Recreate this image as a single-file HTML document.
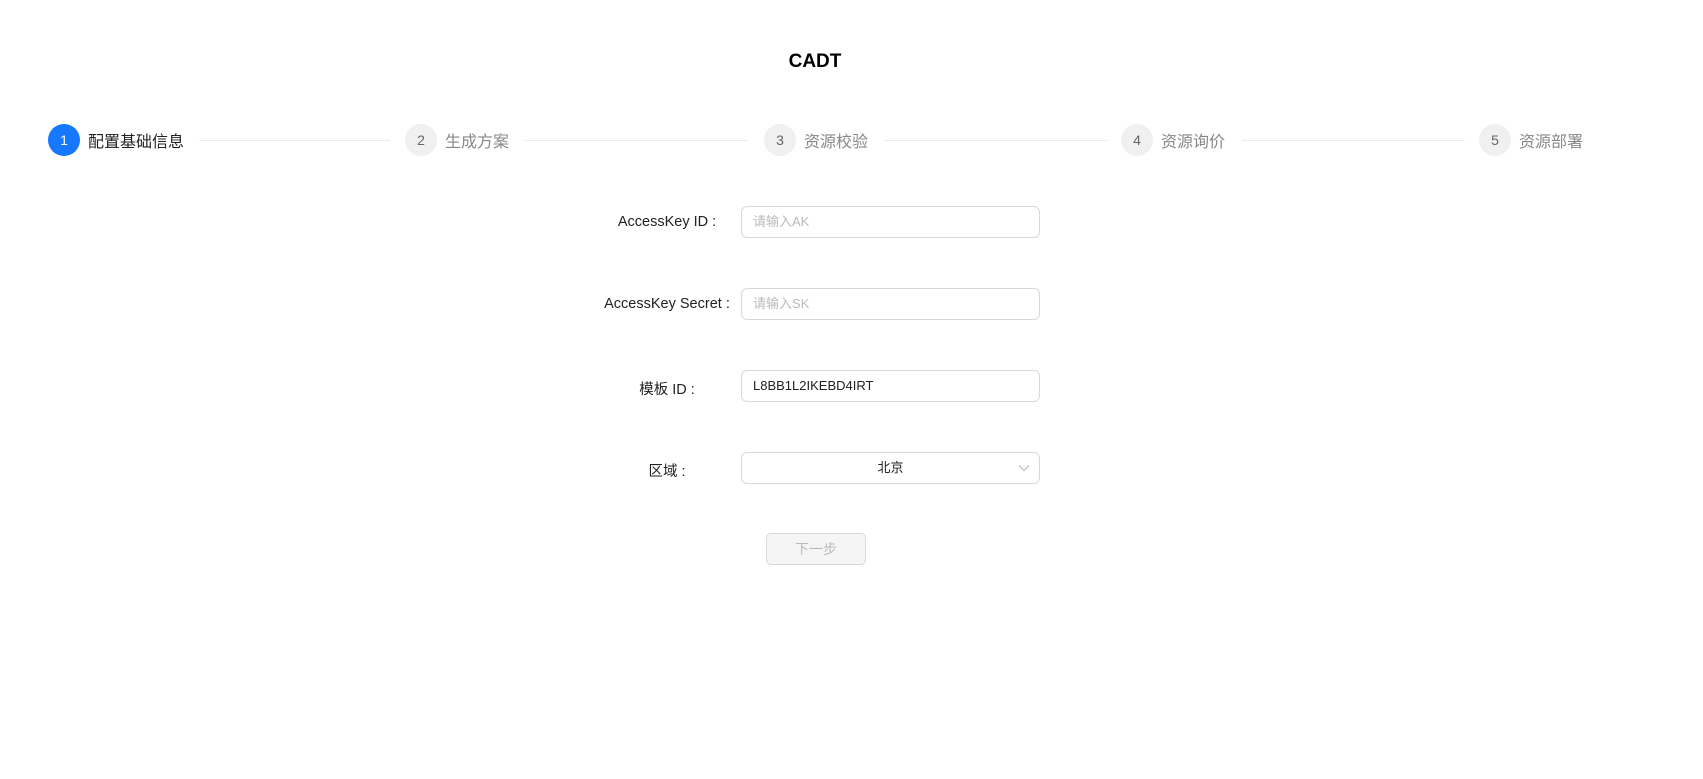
<!DOCTYPE html>
<html><head><meta charset="utf-8"><style>
*{box-sizing:border-box;margin:0;padding:0}
body{width:1703px;height:779px;background:#fff;font-family:"Liberation Sans","Noto Sans CJK SC",sans-serif;position:relative;overflow:hidden;color:#222}
.title{position:absolute;top:51px;left:0;width:1630px;text-align:center;font-weight:bold;font-size:19px;color:#000}
.step{position:absolute;top:124px;height:32px;display:flex;align-items:center}
.c{width:32px;height:32px;border-radius:50%;background:#f0f0f0;color:#666;font-size:14px;display:flex;align-items:center;justify-content:center}
.c.a{background:#1677ff;color:#fff}
.t{margin-left:8px;font-size:16px;color:#888}
.t.a{color:#222}
.line{position:absolute;top:140px;height:1px;background:#ebebeb}
.lab{position:absolute;width:200px;left:567px;text-align:center;font-size:14.5px;color:#222}
.inp{position:absolute;left:741px;width:299px;height:32px;border:1px solid #d9d9d9;border-radius:6px;font-size:13px;padding-left:11px;line-height:30px;color:#222}
.ph{color:#bbb}
.btn{position:absolute;left:766px;top:533px;width:100px;height:32px;border:1px solid #d9d9d9;border-radius:5px;background:#f5f5f5;color:#bbb;font-size:14px;text-align:center;line-height:30px}
</style></head><body>
<div class="title">CADT</div>
<div class="step" style="left:48px"><div class="c a">1</div><div class="t a">配置基础信息</div></div>
<div class="line" style="left:199px;width:191px"></div>
<div class="step" style="left:405px"><div class="c">2</div><div class="t">生成方案</div></div>
<div class="line" style="left:525px;width:223px"></div>
<div class="step" style="left:764px"><div class="c">3</div><div class="t">资源校验</div></div>
<div class="line" style="left:884px;width:223px"></div>
<div class="step" style="left:1121px"><div class="c">4</div><div class="t">资源询价</div></div>
<div class="line" style="left:1242px;width:223px"></div>
<div class="step" style="left:1479px"><div class="c">5</div><div class="t">资源部署</div></div>

<div class="lab" style="top:214px">AccessKey ID :</div>
<div class="inp ph" style="top:206px">请输入AK</div>
<div class="lab" style="top:296px">AccessKey Secret :</div>
<div class="inp ph" style="top:288px">请输入SK</div>
<div class="lab" style="top:378px">模板 ID :</div>
<div class="inp" style="top:370px">L8BB1L2IKEBD4IRT</div>
<div class="lab" style="top:460px">区域 :</div>
<div class="inp" style="top:452px;text-align:center;padding-left:0">北京
<svg style="position:absolute;right:9px;top:11px" width="12" height="8" viewBox="0 0 12 8"><path d="M1 1.5L6 6.5L11 1.5" fill="none" stroke="#bbb" stroke-width="1.2"/></svg></div>
<div class="btn">下一步</div>
</body></html>
